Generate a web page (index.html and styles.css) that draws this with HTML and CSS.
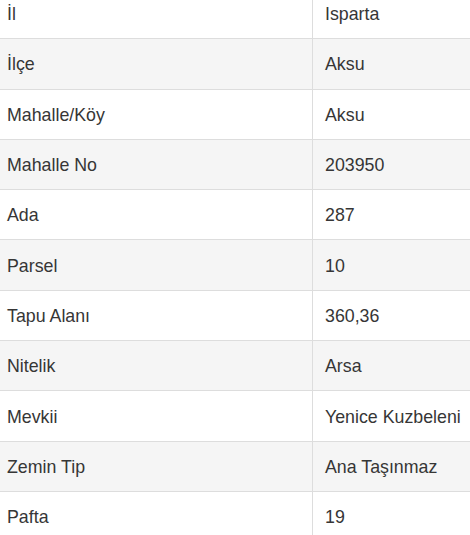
FILE: index.html
```html
<!DOCTYPE html>
<html lang="tr">
<head>
<meta charset="utf-8">
<link rel="stylesheet" href="styles.css">
</head>
<body>
<div class="info-table">
  <div class="row"><div class="cell key">İl</div><div class="cell val">Isparta</div></div>
  <div class="row"><div class="cell key">İlçe</div><div class="cell val">Aksu</div></div>
  <div class="row"><div class="cell key">Mahalle/Köy</div><div class="cell val">Aksu</div></div>
  <div class="row"><div class="cell key">Mahalle No</div><div class="cell val">203950</div></div>
  <div class="row"><div class="cell key">Ada</div><div class="cell val">287</div></div>
  <div class="row"><div class="cell key">Parsel</div><div class="cell val">10</div></div>
  <div class="row"><div class="cell key">Tapu Alanı</div><div class="cell val">360,36</div></div>
  <div class="row"><div class="cell key">Nitelik</div><div class="cell val">Arsa</div></div>
  <div class="row"><div class="cell key">Mevkii</div><div class="cell val">Yenice Kuzbeleni</div></div>
  <div class="row"><div class="cell key">Zemin Tip</div><div class="cell val">Ana Taşınmaz</div></div>
  <div class="row"><div class="cell key">Pafta</div><div class="cell val">19</div></div>
</div>
</body>
</html>
```
FILE: styles.css
```css
html, body {
  margin: 0;
  padding: 0;
  background: #ffffff;
  overflow: hidden;
}
.info-table {
  margin-top: -11px;
  font-family: "Liberation Sans", Arial, sans-serif;
  font-size: 17.8px;
  color: #363636;
}
.row {
  display: grid;
  grid-template-columns: 313px 1fr;
  height: 50.3px;
  box-sizing: border-box;
  border-bottom: 1px solid #dddddd;
}
.row:nth-child(even) {
  background: #f5f5f5;
}
.cell {
  display: flex;
  align-items: center;
  white-space: nowrap;
  padding-top: 2px;
  box-sizing: border-box;
}
.key {
  padding-left: 7px;
  border-right: 1px solid #dddddd;
}
.val {
  padding-left: 12px;
}
```
